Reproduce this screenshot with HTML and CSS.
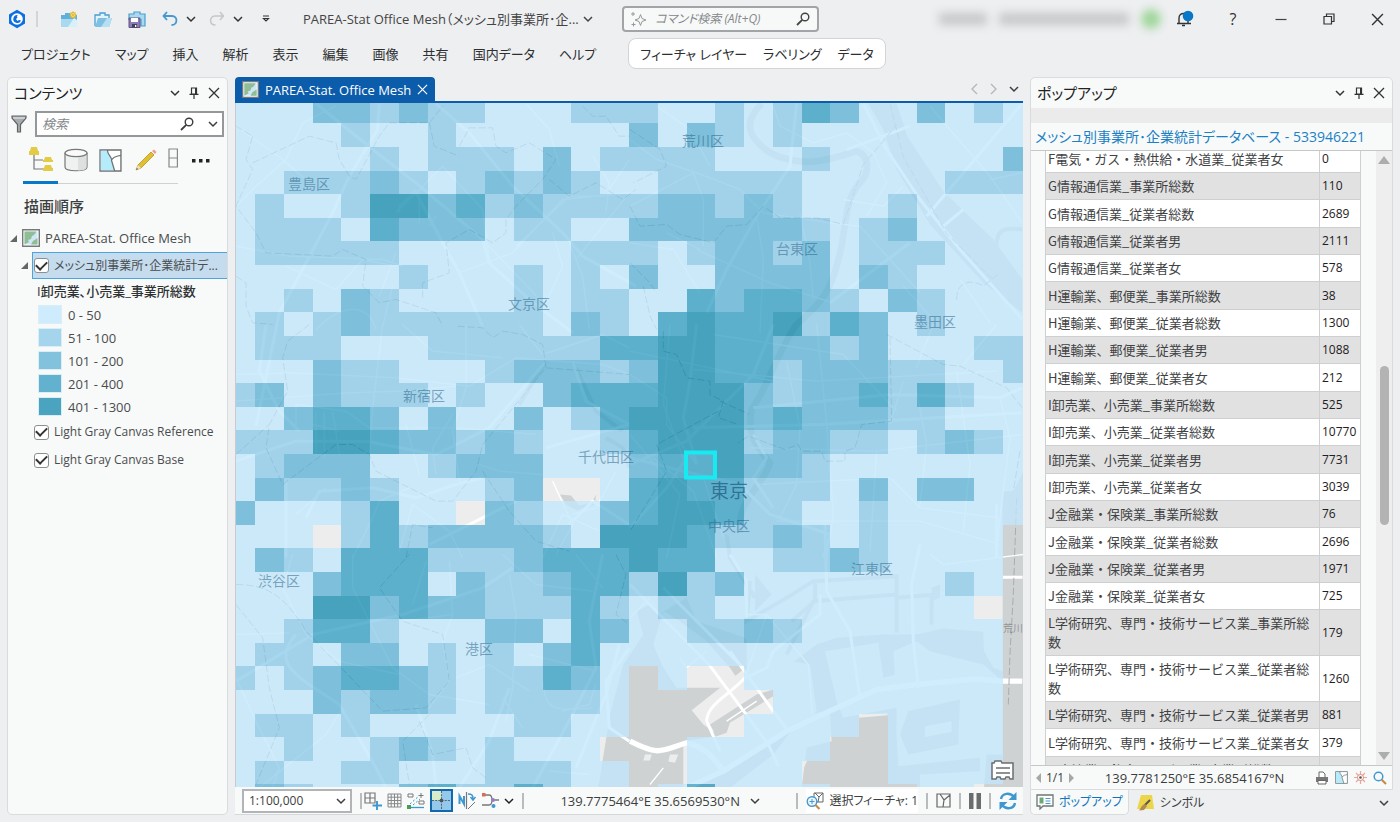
FILE: index.html
```html
<!DOCTYPE html>
<html lang="ja">
<head>
<meta charset="utf-8">
<title>PAREA-Stat Office Mesh</title>
<link rel="stylesheet" href="styles.css">
</head>
<body>
<svg class="defs" aria-hidden="true">
  <symbol id="chev" viewBox="0 0 10 10"><path d="M1 3l4 4 4-4" fill="none" stroke="currentColor" stroke-width="1.5"/></symbol>
  <symbol id="close" viewBox="0 0 12 12"><path d="M1 1l10 10M11 1L1 11" fill="none" stroke="currentColor" stroke-width="1.3"/></symbol>
  <symbol id="pin" viewBox="0 0 10 12"><path d="M2.5 1h5v6h-5zM.5 7.300h9M5 7v5" fill="none" stroke="currentColor" stroke-width="1.2"/><path d="M6 1h1.500v6H6z" fill="currentColor"/></symbol>
  <symbol id="mag" viewBox="0 0 14 14"><circle cx="9" cy="5" r="3.800" fill="none" stroke="currentColor" stroke-width="1.400"/><path d="M6.200 7.800L1 13" stroke="currentColor" stroke-width="1.800"/></symbol>
  <symbol id="mapicon" viewBox="0 0 18 18"><path d="M.7.700h16.600v16.600H.7z" fill="#fff" stroke="#77797b" stroke-width="1.400"/><path d="M2.500 2.500h13v13h-13z" fill="#cfe6f7"/><path d="M2.500 2.500h12L12 6l-2 1-1 3-3 1 1 2-4.500 2.500zM11 12l4.500-3v6.500H9z" fill="#8fbd94"/></symbol>
  <symbol id="polymap" viewBox="0 0 22 22"><path d="M1 1h20v20H1z" fill="#fff" stroke="#6d7174" stroke-width="1.300"/><path d="M1.700 1.700H8C9 6 12 8 12 11l3 9.300H1.700z" fill="#b6ebfa"/><path d="M8 1c0 5 5 7 4 10l3 10M12 10.500C14 7 17 7 21 6" fill="none" stroke="#6d7174" stroke-width="1.200"/></symbol>
</svg>

<div class="app">
  <header class="titlebar">
    <div class="quick">
      <svg class="logo" viewBox="0 0 18 20"><path d="M9 .8l8 4.600v9.200l-8 4.600-8-4.600V5.400z" fill="#0b6fe0"/><circle cx="9" cy="10" r="5.800" fill="#fff"/><path d="M10 6a4 4 0 1 0 3 5.500l-2-.5-1.500 1L8 10l1.500-1.500L8.800 7z" fill="#0b6fe0"/></svg>
      <span class="vline"></span>
      <button class="ib new" aria-label="新規"><svg width="18" height="17" viewBox="0 0 18 17"><path d="M1 4h4V2h5v2h7v12H1z" fill="#5fb0dc"/><path d="M1 8h14v8H1z" fill="#a9d9ef"/><path d="M8 16l6-9 3 2v7z" fill="#d8f0fa"/><circle cx="13" cy="4" r="2.600" fill="#fbe98a" stroke="#dcb93a"/><path d="M13 0v8M9 4h8M10.300 1.300l5.400 5.400M15.700 1.300l-5.400 5.400" stroke="#dcb93a" stroke-width=".7"/></svg></button>
      <button class="ib" aria-label="開く"><svg width="18" height="17" viewBox="0 0 18 17"><path d="M1 15V4h5V2h5v2h4v3" fill="#e4f3fb" stroke="#4a9fd0" stroke-width="1.300"/><path d="M1 16L4 7h14l-3 9z" fill="#7cc0e4"/><path d="M7 16l6-9h5l-3 9z" fill="#b6dff2"/></svg></button>
      <button class="ib" aria-label="保存"><svg width="18" height="17" viewBox="0 0 18 17"><path d="M1 9V3h5V1h6v2h5v12h-4V8" fill="#a9d9ef" stroke="#4a9fd0" stroke-width="1.200"/><path d="M1 7h11v9.500H1z" fill="#8d7bb8" stroke="#5e5580"/><path d="M3 7h7v4H3z" fill="#fff"/><path d="M4 13h5v3.500H4z" fill="#453e5c"/><path d="M7 14h1.300v2H7z" fill="#fff"/></svg></button>
      <button class="ib" aria-label="元に戻す"><svg width="16" height="16" viewBox="0 0 16 16"><path d="M5 1L1.500 5 5 9M2 5h8c6 0 6 9-.5 9" fill="none" stroke="#4798d0" stroke-width="1.800"/></svg></button>
      <button class="ib tiny" aria-label="元に戻す一覧"><svg width="10" height="10"><use href="#chev"/></svg></button>
      <button class="ib" aria-label="やり直し"><svg width="16" height="16" viewBox="0 0 16 16"><path d="M11 1l3.500 4L11 9M14 5H6c-6 0-6 9 .5 9" fill="none" stroke="#c4c7c9" stroke-width="1.500"/></svg></button>
      <button class="ib tiny" aria-label="やり直し一覧"><svg width="10" height="10"><use href="#chev"/></svg></button>
      <button class="ib tiny custom" aria-label="カスタマイズ"><svg width="8" height="8" viewBox="0 0 8 8"><path d="M1 1h6M1.500 3.500h5L4 6z" fill="none" stroke="#333" stroke-width="1.200"/></svg></button>
    </div>
    <button class="docname">PAREA-Stat Office Mesh（メッシュ別事業所･企... <svg width="10" height="10"><use href="#chev"/></svg></button>
    <label class="cmd">
      <svg width="17" height="16" viewBox="0 0 17 16" fill="none" stroke="#96999c"><path d="M10.500 3.500l1.500 4 4 1.500-4 1.500-1.500 4L9 10.500 5 9l4-1.500zM3 1v4M1 3h4M3.500 11.500v4M1.500 13.500h4"/></svg>
      <input type="text" placeholder="コマンド検索 (Alt+Q)" aria-label="コマンド検索">
      <svg width="14" height="14"><use href="#mag"/></svg>
    </label>
    <div class="account" aria-hidden="true"><i class="b1"></i><i class="b2"></i><i class="b3"></i></div>
    <div class="wincontrols">
      <button class="ib" aria-label="通知"><svg width="18" height="18" viewBox="0 0 18 18"><path d="M1 13.500h14M3 13V8c0-6 9-6 9 0v5M6 15.500h3" fill="none" stroke="#333" stroke-width="1.400"/><circle cx="12" cy="6" r="5.300" fill="#0877c6"/></svg></button>
      <button class="ib help" aria-label="ヘルプ">?</button>
      <button class="ib" aria-label="最小化"><svg width="12" height="12" viewBox="0 0 12 12"><path d="M.5 6.500h11" stroke="#444" stroke-width="1.200"/></svg></button>
      <button class="ib" aria-label="元のサイズ"><svg width="12" height="12" viewBox="0 0 12 12" fill="none" stroke="#333" stroke-width="1.200"><path d="M1 3.500h7.500V11H1zM3.500 3.500V1H11v7.500H8.500"/></svg></button>
      <button class="ib" aria-label="閉じる"><svg width="13" height="13"><use href="#close"/></svg></button>
    </div>
  </header>

  <nav class="ribbon">
    <button>プロジェクト</button><button>マップ</button><button>挿入</button><button>解析</button><button>表示</button><button>編集</button><button>画像</button><button>共有</button><button>国内データ</button><button>ヘルプ</button>
    <div class="context"><button>フィーチャ レイヤー</button><button>ラベリング</button><button>データ</button></div>
  </nav>

  <main class="work">
    <aside class="panel contents">
      <div class="phead"><h2>コンテンツ</h2><svg width="10" height="10"><use href="#chev"/></svg><svg width="10" height="12"><use href="#pin"/></svg><svg width="12" height="12"><use href="#close"/></svg></div>
      <div class="find">
        <svg width="16" height="18" viewBox="0 0 16 18"><path d="M1 1h14v2L9.500 9.500V17h-3V9.500L1 3z" fill="#a9acae" stroke="#606467" stroke-width="1.200"/><path d="M2 3h12" stroke="#fff" stroke-width=".8"/></svg>
        <label class="findbox"><input type="text" placeholder="検索" aria-label="検索"><svg width="14" height="14"><use href="#mag"/></svg><svg width="10" height="10"><use href="#chev"/></svg></label>
      </div>
      <div class="views">
        <button class="on" aria-label="描画順序"><svg width="26" height="26" viewBox="0 0 26 26"><path d="M6 9v14h9M6 14h9" fill="none" stroke="#777" stroke-width="1.200"/><path d="M3 1h6l1 4H2zM1 5h10v4H1zM17 11h6l1 3h-8zM15 14h10v2H15zM17 19h6l1 3h-8zM15 22h10v3H15z" fill="#e3cb45"/></svg></button>
        <button aria-label="データソース"><svg width="24" height="24" viewBox="0 0 24 24"><path d="M1 5v14c0 5 22 5 22 0V5" fill="#f0f1f1" stroke="#777" stroke-width="1.200"/><path d="M14 8.500v14c5 0 8.500-1 8.500-3V6z" fill="#dedfdf"/><ellipse cx="12" cy="5" rx="11" ry="3.700" fill="#fafafa" stroke="#777" stroke-width="1.200"/></svg></button>
        <button aria-label="選択状態"><svg width="23" height="23"><use href="#polymap"/></svg></button>
        <button aria-label="編集状態"><svg width="22" height="22" viewBox="0 0 22 22"><path d="M1 21l2-5L16 3l3 3L6 19z" fill="#e0c02f" stroke="#b5962a" stroke-width=".8"/><path d="M1 21l2-5 3 3z" fill="#f1dfc0"/><path d="M17 2l2-1.500L21.500 3 20 5z" fill="#ef9b90"/><path d="M1 21l1-2 1 1z" fill="#444"/></svg></button>
        <button class="cut" aria-label="スナップ"><svg width="10" height="20" viewBox="0 0 10 20"><path d="M12 1H1v18h11M1 10h11M9.400 1v18" fill="none" stroke="#85898b" stroke-width="1.200"/></svg></button>
        <button class="dots" aria-label="その他"><svg width="18" height="4" viewBox="0 0 18 4"><path d="M0 0h3.500v3.500H0zM7 0h3.500v3.500H7zM14 0h3.500v3.500H14z" fill="#222"/></svg></button>
      </div>
      <h3>描画順序</h3>
      <ul class="tree">
        <li class="map"><span class="tri"></span><svg width="18" height="18"><use href="#mapicon"/></svg><span>PAREA-Stat. Office Mesh</span></li>
        <li class="layer"><span class="tri"></span><label><input type="checkbox" checked><span>メッシュ別事業所･企業統計デ...</span></label></li>
        <li class="field">I卸売業､小売業_事業所総数</li>
        <li class="cls"><i class="k1"></i>0 - 50</li>
        <li class="cls"><i class="k2"></i>51 - 100</li>
        <li class="cls"><i class="k3"></i>101 - 200</li>
        <li class="cls"><i class="k4"></i>201 - 400</li>
        <li class="cls"><i class="k5"></i>401 - 1300</li>
        <li class="base"><label><input type="checkbox" checked><span>Light Gray Canvas Reference</span></label></li>
        <li class="base"><label><input type="checkbox" checked><span>Light Gray Canvas Base</span></label></li>
      </ul>
    </aside>

    <section class="view">
      <div class="tabs">
        <div class="tab"><svg width="17" height="17"><use href="#mapicon"/></svg><span>PAREA-Stat. Office Mesh</span><button class="ib" aria-label="タブを閉じる"><svg width="11" height="11"><use href="#close"/></svg></button></div>
        <div class="tabnav"><svg width="7" height="12" viewBox="0 0 7 12"><path d="M6 1L1 6l5 5" fill="none" stroke="#b3b6b8" stroke-width="1.300"/></svg><svg width="7" height="12" viewBox="0 0 7 12"><path d="M1 1l5 5-5 5" fill="none" stroke="#b3b6b8" stroke-width="1.300"/></svg><svg width="10" height="10"><use href="#chev"/></svg></div>
      </div>
      <div class="canvas">
        <svg class="mapsvg" viewBox="0 0 787 685" preserveAspectRatio="xMidYMid slice" role="img" aria-label="事業所総数メッシュ地図">
          <rect width="787" height="685" fill="#ededed"/>
          <g class="water">
            <g transform="translate(394 452) scale(.3333)">
              <path d="M-100 730L-60 480-20 330 40 240 20 170 60 150 85 180 170 130 200 200 345 250 380 300 420 330 480 330 560 270 620 250 760 240 860 240 940 222 1060 232 1062 290 1090 340 1118 350 1118-190 1180-190V730z"/>
              <path class="ln" d="M375 130L300 10 290-60M360 80l-10 120 120-70 80-50 250-15v170M555 80v60l-70 60M800 130l120-10M905 120v90M470 300l80-160 250-20"/>
              <path d="M375 60l50 60-50 50zM905 100l25-10v40l-25 10z"/>
              <path class="land" d="M70 270L100 170 150 200 230 260 300 340 340 400 170 400 140 400 100 340zM350 260L430 310 540 330 560 470 440 560 340 620 170 700H160V560L260 545 345 475 430 475 430 430 350 370zM585 290L745 265 760 370 800 360V460L640 490 620 440zM790 290L860 260 900 290 1060 330 1118 380 1118 600 1070 600 1062 700H870V660L1050 650V610L805 635 800 540V440zM520 480L600 470 605 560 530 580 515 700 300 700 430 600zM45 600h20l-5 18H40zM120 600h25l-10 25-20-4zM687 480l86-6v8l-86 8zM515 617h17l-15 35zM170 335h45l-45 35z"/>
              <path class="land" d="M185 467L340 345 430 415V475L340 510V545H270L220 510z"/>
              <path d="M835 470L990 435 985 570 835 600 810 540zM240 510L380 420 430 405V425L300 505 290 535 260 545z"/>
              <path class="land" d="M885 515L965 500V532L885 548zM1031 120h80l-8 75h-72zM1031 688h30v12h-30z"/>
            </g>
            <g transform="translate(394 -3) scale(.3333)">
              <path d="M715 12H800L832 110 940 275 1090 420 1177 540V640L1060 550 900 375 800 210 760 90z"/>
              <path class="ln riv" d="M395 12C340 70 350 110 420 160 520 210 600 180 680 155 720 170 720 220 690 250 640 300 650 400 625 480 600 590 560 620 500 675 450 740 420 850 365 930 350 1010 380 1040 420 1090 400 1160 320 1200 330 1300"/>
              <path class="ln" d="M1177 390C1110 380 1100 400 1100 440"/>
            </g>
            <path d="M324 392l11 1 8 10 13-3 4-8-1 10-18 6-11-6zM767 422l4-22 16-30v60h-20z"/>
            <g transform="translate(0 222) scale(.3333)"><path class="ln" d="M930 110L850 240M1020 130l60 130 80 60M1110 340l50 30 20 60"/></g>
          </g>
          <g class="roads">
            <g transform="translate(0 -3) scale(.3333)">
              <path class="w" d="M430 12L425 90 340 230 290 340 130 640 60 980M240 12L410 150 540 250 740 420 760 490 880 600 1010 700M600 12L700 100 830 260 980 400 1040 470 1200 560M540 280L620 430 670 520 740 680"/>
              <path d="M0 80L140 180 220 250M0 320L60 260 150 180 200 70 300 20M0 440L160 470 440 480 500 500M150 500L300 570 380 480 480 500M480 340L620 200 740 330 760 480M670 520L830 460 980 300 1180 280 1020 480M490 340V320L540 270M550 280v90M600 350l-20 30M870 12L940 90 970 200M840 440L1000 290 1100 290M1000 430L1040 530 1060 690M1070 170l50 80-10 90M1180 180l-60 90M240 690C330 600 400 620 420 690M430 590l50-130M740 420l200 210M440 680l30-120M950 400l30 100-60 130"/>
            </g>
            <g transform="translate(394 -3) scale(.3333)">
              <path class="w" d="M500 12L480 200 380 350 290 510 230 640M700 12L770 150 870 300 990 450 1177 660M890 350L1177 12M650 150L840 80M940 380l60-50M600 610L840 430"/>
              <path d="M0 120L80 180 200 220 330 270 400 340 600 370 690 380M0 320L190 220 220 300 220 440M80 20L180 90 240 200M430 20l20 60 100 50 100-30 80 60 40 90-60 100M380 350l20 130-10 220M200 450l220 100 190 60M510 340l30 150 10 110M690 380L870 580M900 20L1080 230 1177 370M640 300l120 20 60-60M820 560l90 100M1080 240l97-20M0 430l130 20 80 130M110 400l100 50M990 540l90 130"/>
            </g>
            <g transform="translate(0 222) scale(.3333)">
              <path class="w" d="M90 0L70 140 130 260 190 320M0 410L180 350 390 350 600 390 760 310 930 110M150 470V700M210 580L250 500 410 490 540 520 660 480 740 460M580 660L840 530M1010 110L1050 230 1180 300M930 370L1180 300M1000 600L1070 530 1180 600"/>
              <path d="M0 150L170 145 480 160 700 185 840 100 1100 120 1180 150M0 230L330 205 500 200 660 185M440 0L410 250 400 400M690 0V190L650 320 670 470M500 0L590 80 800 100M180 320V240L330 260 400 310 660 310 900 330M510 300l40 150M600 450l-10-80 60-100M730 420l60 20 130 10M240 265v130M265 260v140M290 262l20 130M230 300l80 20M490 680L530 540 640 620 680 700M950 470l60 130-50 90M920 700l60-130 110 50M1140 440l-60 110-70 20M350 700l60-120 20-50 90-40M180 570l90-80M850 0l70 90 180-60 80 40"/>
            </g>
            <g transform="translate(394 222) scale(.3333)">
              <path class="w" d="M200 0L180 170 160 280 200 420M0 400L160 440 330 480 420 570 600 630 580 700M430 0L370 150 170 350 0 420M190 310L570 300 1177 265M370 250L780 210 1110 220 1177 190M370 330L410 400 370 460 430 550M0 610L110 490 170 400"/>
              <path d="M0 150L110 220 110 300 200 420M190 135L560 170 1100 140M250 30L640 90 800 260M560 0l30 300 20 270-20 130M120 0L100 240 170 430M0 80L430 170M860 200l30 160-20 180M910 0L860 130M980 140l40 280-20 200M1110 220l30 120-30 240-10 120M780 300l40-130M470 110l40 200-10 170-50 100M360 370L740 380 1177 330M380 480l400-20 90 90 240 30M440 590L870 590 1110 660M740 380l-20 300M0 330l150 180-40 190M70 400l120 100 70 200M280 640l-60-180M1000 120l100-120"/>
            </g>
            <g transform="translate(0 452) scale(.3333)">
              <path class="w" d="M180 240C100 330 190 370 310 450L420 640 450 700M0 380L230 240 500 180 740 100 830 40M1100 0L1060 200 1080 340 1010 480 890 700M600 700L590 600 540 450M1180 280L1110 380 1120 520 1180 560M820 400L760 560 670 700M1150 270L1110 420 1020 640"/>
              <path d="M0 240l160-5M0 370L50 480 130 640 110 700M170 0L140 100 210 240 310 320 490 360M350 0v100l60 120 60 120 110 80 180 30M640 20l10 160-30 80 20 120-60 80M820 60l20 120-10 220-20 100M500 200l150-20M570 20l-40 130M660 370l100-40 120 80M800 430l60 90M980 470l80-20 20-60M880 300l200 50M920 380c10 90 30 90 150 80M70 700l200-160 50-80M940 650l120 10M800 0l100 90 170 20M1020 0l80 100"/>
            </g>
            <g transform="translate(394 452) scale(.3333)">
              <path class="big" d="M0 560C90 605 90 590 170 565 230 580 250 610 280 650L470 530 620 460 740 405 860 390 1040 373 1118 380H1177M170 700L280 650"/>
              <path class="w" d="M300 290L430 470 475 530M100 100L340 340M0 90L240 334 345 475 415 570 445 635M585-90L590 110 660 230 690 430M870-30L845 90 850 260 865 400M1118 68h60M1100-150v160M270 590L230 500C230 450 300 420 345 370L410 340 430 290 570 180 570 120M300 0l50 80V190"/>
              <path d="M150 310l20 30 60-50M345 370l65-190-60 0M410 180l125 150 12 150M60 690l40-50M900 0l40 30 240-30M0 190l60-60M290 500l90-60"/>
            </g>
          </g>
          <g class="bounds">
            <g transform="translate(0 -3) scale(.3333)">
              <path d="M0 80L50 110 30 180 50 210 0 320 60 400 90 460 290 470 320 450 390 480 380 560 430 610 480 600 600 640 620 680M50 190L220 110 300 130 310 180 340 230 360 240 430 110 460 70 580 70 620 20M580 70L595 140 670 170M670 140L700 85 770 85 780 140 810 160 880 130 960 180 920 240 840 320 810 360 810 400 770 430 700 390 630 430 640 520 560 550 560 600M1040 20l30 30h40l40 60h30M940 240l60 50 80-40 80 50 40-30M0 530l30 20v70l20 50 60 5"/>
            </g>
            <g transform="translate(394 -3) scale(.3333)">
              <path d="M0 320L30 380 110 375 150 405 250 430 290 380 350 375 400 320 450 355 560 355 640 375M0 90l90 60 20 50-100 50M0 490l60 60 20 30M640 375l60-180 60-70 40-50M780 12l40 160 130 230 140 140M980 600c0-60 50-60 80-40l50-40M40 560l20 90 20 40"/>
            </g>
            <g transform="translate(0 222) scale(.3333)"><path d="M220 0L155 50 140 100 155 200 100 300 90 370 140 480 300 360 350 360 400 390 420 440 520 490 600 530 650 530 720 440 740 360 930 130 920 60 860 30 800 20 770 40 740 10 660 5M930 130L1180 150M0 390l100-90M740 440l80 120 80 90 100 30M510 700l20-100 60 10"/></g>
            <g transform="translate(394 222) scale(.3333)"><path d="M100 20v60l40 10 30 70 70 10v40l40 20-15 50 60 20M265 260L80 360 110 440 0 620M270 230l90 40M770 30L940 120 990 125 1130 190 1177 250M780 40l5 250-90 10-20 70-30 10v30h-60l-10-30h-60l-10-20-40 15-110-40-30 20M1170 380l-20 120"/></g>
            <g transform="translate(0 452) scale(.3333)"><path d="M0 90C100 90 150 130 210 230L440 470 570 460 640 380 620 240 500 200 430 100 520 0M0 150L80 250 100 400 130 520 60 690M580 480L500 560 520 690M550 500l40 100 100-20 20 60 40 30M1140 0L1170 60 1140 180 1180 210"/></g>
            <g transform="translate(394 452) scale(.3333)"><path d="M1160-170L1150 120 1140 300 1135 450"/></g>
          </g>
          <g id="cells" shape-rendering="crispEdges"></g>
          <g class="labels">
            <text x="52" y="86">豊島区</text><text x="446" y="43">荒川区</text><text x="272" y="206">文京区</text><text x="540" y="151">台東区</text><text x="678" y="224">墨田区</text><text x="167" y="298">新宿区</text><text x="342" y="359">千代田区</text><text x="472" y="428">中央区</text><text x="22" y="483">渋谷区</text><text x="229" y="551">港区</text><text x="615" y="471">江東区</text>
            <text class="city" x="474" y="395">東京</text>
            <text class="river" x="767" y="529">荒川</text>
          </g>
          <rect x="450" y="350" width="29" height="25" fill="none" stroke="#18eaf2" stroke-width="4"/>
        </svg>
        <button class="attr ib" aria-label="属性"><svg width="24" height="21" viewBox="0 0 24 21"><path d="M1 19V3h2l1-2h6l1 2h11v16h-3l-1-2h-3l-1 2h-4l-1-2H6l-1 2z" fill="#fff" stroke="#6b6e70" stroke-width="1.500"/><path d="M5 8h14M5 13h14" stroke="#6b6e70" stroke-width="1.500"/></svg></button>
      </div>
      <div class="status">
        <label class="scale"><select aria-label="縮尺"><option>1:100,000</option></select><svg width="10" height="10"><use href="#chev"/></svg></label>
        <span class="vline"></span>
        <div class="tools">
          <svg width="18" height="18" viewBox="0 0 18 18"><path d="M1 1h10v10H1zM6 1v10M1 6h10" fill="none" stroke="#777" stroke-width="1.200"/><path d="M13 9v9M8.500 13.500H18" stroke="#3f97cf" stroke-width="1.900"/></svg>
          <svg width="15" height="15" viewBox="0 0 15 15"><path d="M1 1h13v13H1zM4.200 1v13M7.500 1v13M10.700 1v13M1 4.200h13M1 7.500h13M1 10.700h13" fill="none" stroke="#85888a"/></svg>
          <svg width="18" height="17" viewBox="0 0 18 17"><path d="M1 2h5v3H1zM12 9h5v3h-5z" fill="#fff" stroke="#777"/><path d="M14 1v5M11.500 3.500h5" stroke="#777"/><path d="M3 12l9-8M6 13l7-6" stroke="#3f97cf" stroke-dasharray="2 2"/><path d="M2 15.500h15" stroke="#3f97cf" stroke-width="1.300"/><path d="M0 13h4v4H0z" fill="#4c9a57"/></svg>
          <button class="ib on" aria-label="スナップ"><svg width="19" height="19" viewBox="0 0 18 18"><path d="M0 0h9v9H0z" fill="#d8ecc9"/><path d="M9 0v18M0 9h18" stroke="#4d6b7c" stroke-dasharray="2 1"/><path d="M7.500 7.500h3v3h-3z" fill="#555"/></svg></button>
          <svg width="18" height="18" viewBox="0 0 18 18"><path d="M1.500 12V4L6 12V4" fill="none" stroke="#3f97cf" stroke-width="2"/><path d="M8.500 0v17" stroke="#777" stroke-width="1.200"/><path d="M10 17l7-7" stroke="#777"/><path d="M10 2c4 0 5 1 5 5M12.500 5L15 8l2.500-3" fill="none" stroke="#3f97cf" stroke-width="1.500"/></svg>
          <svg width="18" height="17" viewBox="0 0 18 17"><path d="M3 3h5c4 0 4 10 0 10H1M12 8h6" fill="none" stroke="#777" stroke-width="1.300"/><path d="M1 1h3.500v3.500H1z" fill="#df6a50"/><circle cx="12" cy="8" r="2" fill="#9a7cc4"/><circle cx="12.500" cy="14" r="2" fill="#3f97cf"/></svg>
          <svg width="10" height="10"><use href="#chev"/></svg>
        </div>
        <span class="vline"></span>
        <div class="coord"><span>139.7775464°E 35.6569530°N</span><svg width="10" height="10"><use href="#chev"/></svg></div>
        <span class="vline"></span>
        <button class="selcount"><svg width="18" height="18" viewBox="0 0 18 18"><path d="M8 1h9v9H8z" fill="#fff" stroke="#666"/><path d="M9 1l4 4-1 5M13 5l4-4" fill="none" stroke="#666"/><circle cx="6" cy="9.500" r="4.800" fill="#eaf5fc" stroke="#4798d0" stroke-width="1.400"/><path d="M3.500 9.500h5M6 7v5" stroke="#4798d0"/><path d="M9.500 13l4 4" stroke="#c58a45" stroke-width="2.200"/></svg>選択フィーチャ: 1</button>
        <span class="vline"></span>
        <svg width="15" height="15" viewBox="0 0 15 15"><path d="M1 1h13v13H1zM4 1l4 6-1 7M8 7l6-5" fill="none" stroke="#666" stroke-width="1.200"/></svg>
        <span class="vline"></span>
        <svg width="12" height="16" viewBox="0 0 12 16"><path d="M0 0h4.500v16H0zM7.500 0H12v16H7.500z" fill="#6a6d6f"/></svg>
        <span class="vline"></span>
        <svg width="18" height="18" viewBox="0 0 18 18"><path d="M2 7c1-6 9-7 13-2M16 11c-1 6-9 7-13 2" fill="none" stroke="#3f97cf" stroke-width="2.400"/><path d="M17.500 0v8h-8zM.5 18v-8h8z" fill="#3f97cf"/></svg>
      </div>
    </section>

    <aside class="side">
      <div class="panel popup">
        <div class="phead"><h2>ポップアップ</h2><svg width="10" height="10"><use href="#chev"/></svg><svg width="10" height="12"><use href="#pin"/></svg><svg width="12" height="12"><use href="#close"/></svg></div>
        <div class="band"></div>
        <h4>メッシュ別事業所･企業統計データベース - 533946221</h4>
        <div class="scroller">
          <div class="clip">
            <table>
              <tbody>
              <tr><th scope="row">F電気・ガス・熱供給・水道業_従業者女</th><td>0</td></tr>
              <tr><th scope="row">G情報通信業_事業所総数</th><td>110</td></tr>
              <tr><th scope="row">G情報通信業_従業者総数</th><td>2689</td></tr>
              <tr><th scope="row">G情報通信業_従業者男</th><td>2111</td></tr>
              <tr><th scope="row">G情報通信業_従業者女</th><td>578</td></tr>
              <tr><th scope="row">H運輸業、郵便業_事業所総数</th><td>38</td></tr>
              <tr><th scope="row">H運輸業、郵便業_従業者総数</th><td>1300</td></tr>
              <tr><th scope="row">H運輸業、郵便業_従業者男</th><td>1088</td></tr>
              <tr><th scope="row">H運輸業、郵便業_従業者女</th><td>212</td></tr>
              <tr><th scope="row">I卸売業、小売業_事業所総数</th><td>525</td></tr>
              <tr><th scope="row">I卸売業、小売業_従業者総数</th><td>10770</td></tr>
              <tr><th scope="row">I卸売業、小売業_従業者男</th><td>7731</td></tr>
              <tr><th scope="row">I卸売業、小売業_従業者女</th><td>3039</td></tr>
              <tr><th scope="row">J金融業・保険業_事業所総数</th><td>76</td></tr>
              <tr><th scope="row">J金融業・保険業_従業者総数</th><td>2696</td></tr>
              <tr><th scope="row">J金融業・保険業_従業者男</th><td>1971</td></tr>
              <tr><th scope="row">J金融業・保険業_従業者女</th><td>725</td></tr>
              <tr><th scope="row">L学術研究、専門・技術サービス業_事業所総数</th><td>179</td></tr>
              <tr><th scope="row">L学術研究、専門・技術サービス業_従業者総数</th><td>1260</td></tr>
              <tr><th scope="row">L学術研究、専門・技術サービス業_従業者男</th><td>881</td></tr>
              <tr><th scope="row">L学術研究、専門・技術サービス業_従業者女</th><td>379</td></tr>
              <tr><th scope="row">M宿泊業、飲食サービス業_事業所総数</th><td></td></tr>
              </tbody>
            </table>
          </div>
          <div class="bar"><i class="up"></i><span class="gap1"></span><span class="thumb"></span><span class="gap2"></span><i class="down"></i></div>
        </div>
        <div class="pfoot">
          <i class="left"></i><span>1/1</span><i class="right"></i>
          <span class="pcoord">139.7781250°E 35.6854167°N</span>
          <div class="acts">
            <svg width="14" height="14" viewBox="0 0 14 14"><path d="M4 6V1h4l2 2v3" fill="#fff" stroke="#666"/><path d="M1 6h12v5H1z" fill="#777"/><path d="M3 9.500h8V13H3z" fill="#fff" stroke="#666"/></svg>
            <svg width="13" height="13"><use href="#polymap"/></svg>
            <svg width="13" height="13" viewBox="0 0 13 13"><path d="M6.500 0v13M0 6.500h13M2 2l9 9M11 2l-9 9" stroke="#e9a79a" stroke-width="1.200"/><circle cx="6.500" cy="6.500" r="3" fill="#fff" stroke="#e08a7a"/><circle cx="6.500" cy="6.500" r="1.300" fill="#555"/></svg>
            <svg width="14" height="14" viewBox="0 0 14 14"><circle cx="5.500" cy="5.500" r="4.300" fill="#f4faff" stroke="#4798d0" stroke-width="1.500"/><path d="M8.700 8.700L13 13" stroke="#c58a45" stroke-width="2"/></svg>
          </div>
        </div>
      </div>
      <div class="ptabs">
        <button class="on"><svg width="18" height="16" viewBox="0 0 18 16"><path d="M1 1h16v11H7l-3 3v-3H1z" fill="#fff" stroke="#707476" stroke-width="1.300"/><path d="M3.500 3.500h4v6h-4z" fill="#6aa874"/><path d="M9.500 4.500h5M9.500 7h5M9.500 9.500h5" stroke="#4798d0"/></svg>ポップアップ</button>
        <button><svg width="18" height="16" viewBox="0 0 18 16"><path d="M4 0h11l2 14H0z" fill="#ecd548"/><path d="M13 5L7 11" stroke="#555" stroke-width="2"/><path d="M8 9l2 2-3 4-5 .5c2-2 2-5 6-6.500z" fill="#b08a50"/></svg>シンボル</button>
        <svg class="more" width="10" height="10"><use href="#chev"/></svg>
      </div>
    </aside>
  </main>
</div>
<script src="map.js"></script>
</body>
</html>
```
FILE: styles.css
```css
* { box-sizing: border-box; }
body {
  margin: 0;
  background: #eeeff1;
  color: #3c3e40;
  font: 13px/18px "Open Sans", "Noto Sans CJK JP", sans-serif;
  font-feature-settings: "palt";
}
button, input, select { font: inherit; color: inherit; font-feature-settings: inherit; }
button { border: 0; background: none; padding: 0; white-space: nowrap; }
h2, h3, h4, ul { margin: 0; padding: 0; font-weight: 400; }
ul { list-style: none; }
svg { display: block; flex: none; }
.defs { position: absolute; width: 0; height: 0; }
.app { display: flex; flex-direction: column; height: 100vh; overflow: hidden; padding: 1px 7px 7px; }
.ib { display: flex; align-items: center; justify-content: center; flex: none; }
.vline { width: 2px; height: 16px; background: #b9bcbe; flex: none; }

.titlebar { display: flex; align-items: center; height: 36px; flex: none; }
.quick { display: flex; align-items: center; width: 296px; flex: none; }
.logo { width: 18px; height: 20px; margin: 0 10px 0 1px; }
.quick .vline { background: #d3d5d7; margin-right: 22px; }
.quick .ib { margin-right: 16px; color: #333; }
.quick .ib.tiny { margin: 0 13px 0 -8px; }
.quick .ib.custom { margin-left: 6px; }
.docname { display: flex; align-items: center; gap: 4px; width: 285px; flex: none; color: #444; }
.cmd { display: flex; align-items: center; gap: 8px; width: 197px; height: 26px; margin-left: 34px; padding: 0 7px 0 6px; background: #f7f9f9; border: 2px solid #a2a5a7; border-radius: 4px; color: #444; flex: none; }
.cmd input { flex: 1; min-width: 0; border: 0; background: none; font-size: 12px; font-style: italic; padding: 0; }
input::placeholder { color: #85888a; opacity: 1; }
.account { display: flex; align-items: center; margin-left: auto; filter: blur(5px); }
.account i { height: 12px; background: #c6c7c9; }
.b1 { width: 48px; }
.b2 { width: 130px; margin-left: 12px; }
.account .b3 { width: 20px; height: 20px; margin-left: 12px; background: #9ed69a; border-radius: 10px; }
.wincontrols { display: flex; width: 240px; flex: none; margin-right: -8px; }
.wincontrols .ib { flex: 1; height: 30px; color: #333; }
.help { font-size: 16px; }

.ribbon { display: flex; align-items: center; height: 33px; flex: none; padding-left: 14px; gap: 24px; color: #2c2e30; }
.context { display: flex; align-items: center; gap: 16px; height: 31px; padding: 0 11px; margin-left: 8px; background: #fff; border: 1px solid #d2d4d6; border-radius: 8px; }

.work { display: grid; grid-template-columns: 221px minmax(0, 1fr) 363px; column-gap: 7px; flex: 1; min-height: 0; margin-top: 7px; }
.panel { background: #f8faf9; border: 1px solid #d9dbdd; border-radius: 5px; min-width: 0; }
.phead { display: flex; align-items: center; height: 30px; padding: 0 7px 0 6px; gap: 9px; color: #333; flex: none; }
.phead h2 { flex: 1; font-size: 15px; line-height: 24px; color: #222; }

.find { display: flex; align-items: center; gap: 8px; padding: 3px 3px 0 3px; }
.findbox { display: flex; align-items: center; gap: 14px; flex: 1; height: 26px; padding: 0 4px 0 5px; background: #fff; border: 2px solid #95989a; }
.findbox input { flex: 1; width: 0; min-width: 0; border: 0; padding: 0; font-style: italic; }
.views { display: flex; align-items: stretch; height: 47px; padding-left: 15px; }
.views button { display: flex; align-items: center; justify-content: center; width: 35px; border-bottom: 1px solid #cfd1d3; }
.views .on { border-bottom: 3px solid #0878c8; }
.views .cut { width: 15px; justify-content: flex-end; padding-bottom: 4px; }
.views .dots { border: 0; padding-left: 10px; }
.contents h3 { font-size: 15px; line-height: 22px; font-weight: 500; padding: 11px 0 0 16px; }
.tree { padding-top: 7px; font-size: 12px; }
.tree li { display: flex; align-items: center; height: 28px; white-space: nowrap; color: #4a4c4e; }
.tree label { display: flex; align-items: center; gap: 5px; }
.tri { width: 0; height: 0; border-left: 7px solid transparent; border-bottom: 7px solid #666; flex: none; }
.tree .map { padding-left: 2px; gap: 5px; font-size: 13px; }
.tree .layer { padding-left: 13px; gap: 4px; height: 27px; }
.layer label { flex: 1; height: 27px; background: #c5dcee; border: 1px solid #4ea3da; border-right: 0; padding-left: 1px; overflow: hidden; }
.tree .field { height: 24px; padding-left: 29px; font-weight: 500; font-size: 13px; color: #303234; }
.tree .cls { height: 23px; padding-left: 30px; gap: 6px; font-size: 13px; }
.cls i { width: 24px; height: 19px; border: 1px solid #dceef5; }
.tree .base { padding-left: 26px; }
.k1 { background: #cfebfe; }
.k2 { background: #a5d5ed; }
.k3 { background: #82c2dd; }
.k4 { background: #62b2cf; }
.k5 { background: #4aa4bf; }
input[type="checkbox"] { appearance: none; width: 15px; height: 15px; margin: 0; background: #fff; border: 1px solid #8c8f91; border-radius: 3px; display: grid; place-items: center; flex: none; }
input[type="checkbox"]:checked::after { content: ""; width: 9px; height: 5px; margin-bottom: 3px; border-left: 2px solid #333; border-bottom: 2px solid #333; transform: rotate(-45deg); }

.view { display: flex; flex-direction: column; min-width: 0; min-height: 0; }
.tabs { display: flex; justify-content: space-between; height: 26px; border-bottom: 2px solid #0b5cab; flex: none; }
.tab { display: flex; align-items: center; width: 200px; gap: 6px; padding: 1px 7px 0 7px; background: #0b5cab; color: #fff; border-radius: 4px 4px 0 0; white-space: nowrap; }
.tab .ib { margin-left: auto; }
.tabnav { display: flex; align-items: center; gap: 12px; padding-right: 4px; }
.canvas { position: relative; flex: 1; min-height: 0; border-left: 1px solid #c8cbcd; }
.mapsvg { width: 100%; height: 100%; }
.attr { position: absolute; right: 8px; bottom: 6px; }
.water path { fill: #ced2d3; }
.water .land { fill: #ededed; }
.water .ln { fill: none; stroke: #ced2d3; stroke-width: 12; }
.water .riv { stroke-width: 20; }
.roads { fill: none; stroke: #fff; stroke-linejoin: round; }
.roads path { stroke-width: 4; }
.roads .w { stroke-width: 9; }
.roads .big { stroke-width: 16; }
.bounds { fill: none; stroke: #a9adaf; stroke-width: 3; stroke-dasharray: 22 8; }
#cells { opacity: .75; }
.c1 { fill: #c1e8fe; }
.c2 { fill: #89cae9; }
.c3 { fill: #5ab2d5; }
.c4 { fill: #2e9cc2; }
.c5 { fill: #108aae; }
.labels { font: 14px "Noto Sans CJK JP", sans-serif; font-feature-settings: normal; fill: #225c82; fill-opacity: .5; }
.labels .city { font-size: 19px; fill-opacity: .75; }
.labels .river { font-size: 10px; fill: #555; }

.status { display: flex; align-items: center; height: 28px; flex: none; gap: 8px; padding: 0 6px 0 7px; background: #f8faf9; border-bottom: 1px solid #d5d7d9; }
.scale { display: flex; align-items: center; width: 110px; height: 24px; padding: 0 4px 0 5px; background: #fff; border: 2px solid #b2b5b7; flex: none; }
.scale select { flex: 1; min-width: 0; appearance: none; border: 0; background: none; padding: 0; font-size: 12px; }
.tools { display: flex; align-items: center; gap: 5px; margin-left: -6px; color: #222; }
.tools .on { width: 23px; height: 23px; background: #95c9ec; border: 2px solid #1168ab; }
.coord { display: flex; flex: 1; align-items: center; justify-content: center; gap: 10px; white-space: nowrap; }
.selcount { display: flex; align-items: center; gap: 5px; height: 24px; padding: 0; background: #fff; font-size: 12px; }

.side { display: flex; flex-direction: column; min-width: 0; min-height: 0; }
.popup { display: flex; flex-direction: column; flex: 1; min-height: 0; border-radius: 5px 5px 0 0; }
.band { height: 15px; background: #ebebeb; flex: none; }
.popup h4 { height: 28px; flex: none; padding-left: 4px; font-size: 14px; line-height: 28px; color: #1c80c4; white-space: nowrap; border-bottom: 1px solid #c5c8ca; }
.scroller { display: flex; flex: 1; min-height: 0; }
.clip { flex: 1; min-width: 0; overflow: hidden; padding: 0 15px 0 14px; }
table { width: 100%; margin-top: -6px; border-collapse: collapse; table-layout: fixed; background: #fff; font: 13px/19px "Noto Sans CJK JP", sans-serif; font-feature-settings: normal; }
th, td { height: 27px; padding: 3px 2px 4px; border: 1px solid #cdcfd1; text-align: left; font-weight: 400; color: #404244; }
td { width: 41px; font-family: "Open Sans", sans-serif; font-size: 12px; color: #1e2022; }
tr:nth-child(even) { background: #e1e1e1; }
tr:nth-child(3n) th { height: 28px; }
.bar { display: flex; flex-direction: column; align-items: center; width: 16px; padding: 5px 0; background: #eeeeee; flex: none; }
.bar i { border-left: 6px solid transparent; border-right: 6px solid transparent; }
.bar .up { border-bottom: 8px solid #acadae; }
.bar .down { border-top: 8px solid #acadae; }
.gap1 { flex: 203; }
.thumb { flex: 160; width: 9px; background: #b3b3b3; border-radius: 5px; }
.gap2 { flex: 229; }
.pfoot { display: flex; align-items: center; height: 24px; gap: 5px; padding: 0 5px; border-top: 1px solid #c5c8ca; flex: none; font-size: 12px; }
.pfoot i { border-top: 5px solid transparent; border-bottom: 5px solid transparent; }
.left { border-right: 5px solid #a5a7a9; }
.right { border-left: 5px solid #a5a7a9; }
.pcoord { flex: 1; text-align: center; font-size: 13px; white-space: nowrap; }
.acts { display: flex; gap: 6px; }
.ptabs { display: flex; align-items: stretch; height: 25px; flex: none; gap: 3px; padding-right: 4px; font-size: 12px; }
.ptabs button { display: flex; align-items: center; gap: 5px; padding: 0 5px; }
.ptabs .on { color: #0f74bf; background: #f8faf9; border: 1px solid #d9dbdd; border-top: 0; border-radius: 0 0 5px 5px; }
.more { margin: 8px 0 0 auto; }
```
FILE: map.js
```javascript
// Mesh classes, one digit per cell: 0 = no data, 1 to 5 = legend classes.
const mesh = [
  "1113323221112221121243113121",
  "1111211211111131321211111111",
  "1111121222131222211121111113",
  "1122232123232112222211111222",
  "1211255342322223323211121111",
  "1222143331221133333321231111",
  "1222221111112221233231222111",
  "1111112111212131133331321111",
  "1121321111212211434432132111",
  "1212322222213214544524312111",
  "1222111222222445544332311122",
  "1113221112333235544233322112",
  "2313222121134445553233424211",
  "1134431311312455553433322111",
  "2225543323211245552332212321",
  "1233311233311134453321111111",
  "1322321112300145442221313311",
  "3111241103211345542211211111",
  "1110242333321555422321211110",
  "1321444222344454411223211110",
  "1113444132234425231111111210",
  "1115534332224212211111111100",
  "1124421113314311223211111110",
  "1221331212134111111111111110",
  "2123443212243101001111111110",
  "1113233212222100000111111110",
  "1221211111221100001111011110",
  "1121123212111000111110011110",
  "1211221112221100111100011110",
  "1321113422421101411110001100"
];
const stepX = 28.77, stepY = 23.61;
const edgeX = i => i === 0 ? 0 : Math.round(19 + stepX * (i - 1));
const edgeY = j => j === 0 ? 0 : Math.round(20.400 + stepY * (j - 1));
const layer = document.getElementById("cells");
mesh.forEach((row, j) => {
  [...row].forEach((level, i) => {
    if (level === "0") return;
    const cell = document.createElementNS("http://www.w3.org/2000/svg", "rect");
    cell.setAttribute("class", "c" + level);
    cell.setAttribute("x", edgeX(i));
    cell.setAttribute("y", edgeY(j));
    cell.setAttribute("width", edgeX(i + 1) - edgeX(i));
    cell.setAttribute("height", edgeY(j + 1) - edgeY(j));
    layer.appendChild(cell);
  });
});
```
